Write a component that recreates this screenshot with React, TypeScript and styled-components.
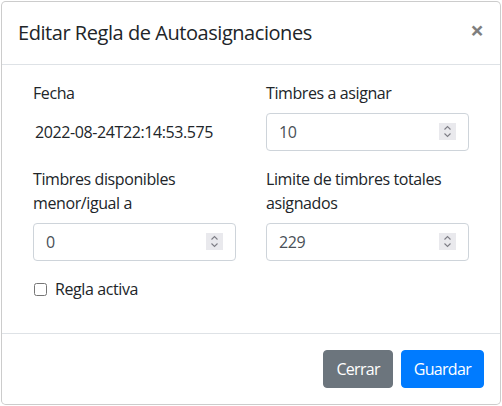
import React from 'react';
import styled, { createGlobalStyle } from 'styled-components';

const GlobalStyle = createGlobalStyle`
  html, body {
    margin: 0;
    padding: 0;
    background: #fff;
  }
  body {
    font-family: "Segoe UI", "Open Sans", "Liberation Sans", sans-serif;
    font-size: 16px;
    line-height: 1.5;
    letter-spacing: -0.4px;
    color: #212529;
  }
  * {
    box-sizing: border-box;
  }
`;

const Stage = styled.div`
  padding: 1px;
  width: 502px;
  height: 406px;
`;

const Modal = styled.div`
  width: 500px;
  background: #fff;
  border: 1px solid rgba(0, 0, 0, 0.2);
  border-radius: 0.3rem;
  display: flex;
  flex-direction: column;
`;

const Header = styled.div`
  display: flex;
  align-items: flex-start;
  justify-content: space-between;
  padding: 16px;
  border-bottom: 1px solid #dee2e6;
`;

const Title = styled.h5`
  margin: 0;
  font-size: 20px;
  font-weight: 400;
  line-height: 1.5;
  letter-spacing: -0.45px;
`;

const CloseButton = styled.button`
  padding: 16px;
  margin: -16px -16px -16px auto;
  background: transparent;
  border: 0;
  font-family: inherit;
  font-size: 24px;
  font-weight: 700;
  line-height: 1;
  color: #000;
  opacity: 0.5;
  text-shadow: 0 1px 0 #fff;
  cursor: pointer;
`;

const Body = styled.div`
  padding: 16px 31px;
  display: grid;
  grid-template-columns: 1fr 1fr;
  column-gap: 30px;
`;

const FormGroup = styled.div<{ $span?: boolean }>`
  margin-bottom: 16px;
  grid-column: ${(p) => (p.$span ? '1 / -1' : 'auto')};
`;

const Label = styled.label`
  display: block;
  margin-bottom: 8px;
`;

const PlainText = styled.div`
  padding: 6px 0 6px 1px;
  border: 1px solid transparent;
  line-height: 1.5;
  color: #212529;
`;

const InputWrap = styled.div`
  position: relative;
`;

const Input = styled.input`
  display: block;
  width: 100%;
  height: 38px;
  padding: 6px 12px;
  font-family: inherit;
  font-size: 16px;
  line-height: 1.5;
  letter-spacing: inherit;
  color: #495057;
  background: #fff;
  border: 1px solid #ced4da;
  border-radius: 4px;
  appearance: textfield;
  -moz-appearance: textfield;
  &::-webkit-outer-spin-button,
  &::-webkit-inner-spin-button {
    -webkit-appearance: none;
    margin: 0;
  }
`;

const Spinner = styled.span`
  position: absolute;
  right: 13px;
  top: 10px;
  width: 17px;
  height: 17px;
  background: #e9e9ed;
  display: flex;
  align-items: center;
  justify-content: center;
  pointer-events: none;
`;

const Check = styled.div`
  display: flex;
  align-items: center;
  gap: 8px;
`;

const CheckBox = styled.input`
  margin: 0 0 0 1px;
  width: 13px;
  height: 13px;
`;

const Footer = styled.div`
  display: flex;
  justify-content: flex-end;
  align-items: center;
  padding: 12px;
  border-top: 1px solid #dee2e6;
`;

const Button = styled.button<{ $variant: 'primary' | 'secondary' }>`
  margin: 4px;
  padding: 6px 12px;
  font-family: inherit;
  font-size: 16px;
  line-height: 1.5;
  letter-spacing: -0.7px;
  color: #fff;
  border: 1px solid ${(p) => (p.$variant === 'primary' ? '#007bff' : '#6c757d')};
  background: ${(p) => (p.$variant === 'primary' ? '#007bff' : '#6c757d')};
  border-radius: 4px;
  cursor: pointer;
`;

const SpinIcon = () => (
  <svg width="9" height="13" viewBox="0 0 9 13" fill="none">
    <path d="M1.5 4.5 L4.5 1.5 L7.5 4.5" stroke="#7d7d85" strokeWidth="1.1" />
    <path d="M1.5 8.5 L4.5 11.5 L7.5 8.5" stroke="#7d7d85" strokeWidth="1.1" />
  </svg>
);

const NumberField = ({ value }: { value: string }) => (
  <InputWrap>
    <Input type="number" defaultValue={value} />
    <Spinner>
      <SpinIcon />
    </Spinner>
  </InputWrap>
);

export default function App() {
  return (
    <>
      <GlobalStyle />
      <Stage>
        <Modal>
          <Header>
            <Title>Editar Regla de Autoasignaciones</Title>
            <CloseButton aria-label="Close">×</CloseButton>
          </Header>
          <Body>
            <FormGroup>
              <Label>Fecha</Label>
              <PlainText>2022-08-24T22:14:53.575</PlainText>
            </FormGroup>
            <FormGroup>
              <Label>Timbres a asignar</Label>
              <NumberField value="10" />
            </FormGroup>
            <FormGroup>
              <Label>
                Timbres disponibles
                <br />
                menor/igual a
              </Label>
              <NumberField value="0" />
            </FormGroup>
            <FormGroup>
              <Label>
                Limite de timbres totales
                <br />
                asignados
              </Label>
              <NumberField value="229" />
            </FormGroup>
            <FormGroup $span>
              <Check>
                <CheckBox type="checkbox" id="activa" />
                <label htmlFor="activa">Regla activa</label>
              </Check>
            </FormGroup>
          </Body>
          <Footer>
            <Button $variant="secondary">Cerrar</Button>
            <Button $variant="primary">Guardar</Button>
          </Footer>
        </Modal>
      </Stage>
    </>
  );
}
